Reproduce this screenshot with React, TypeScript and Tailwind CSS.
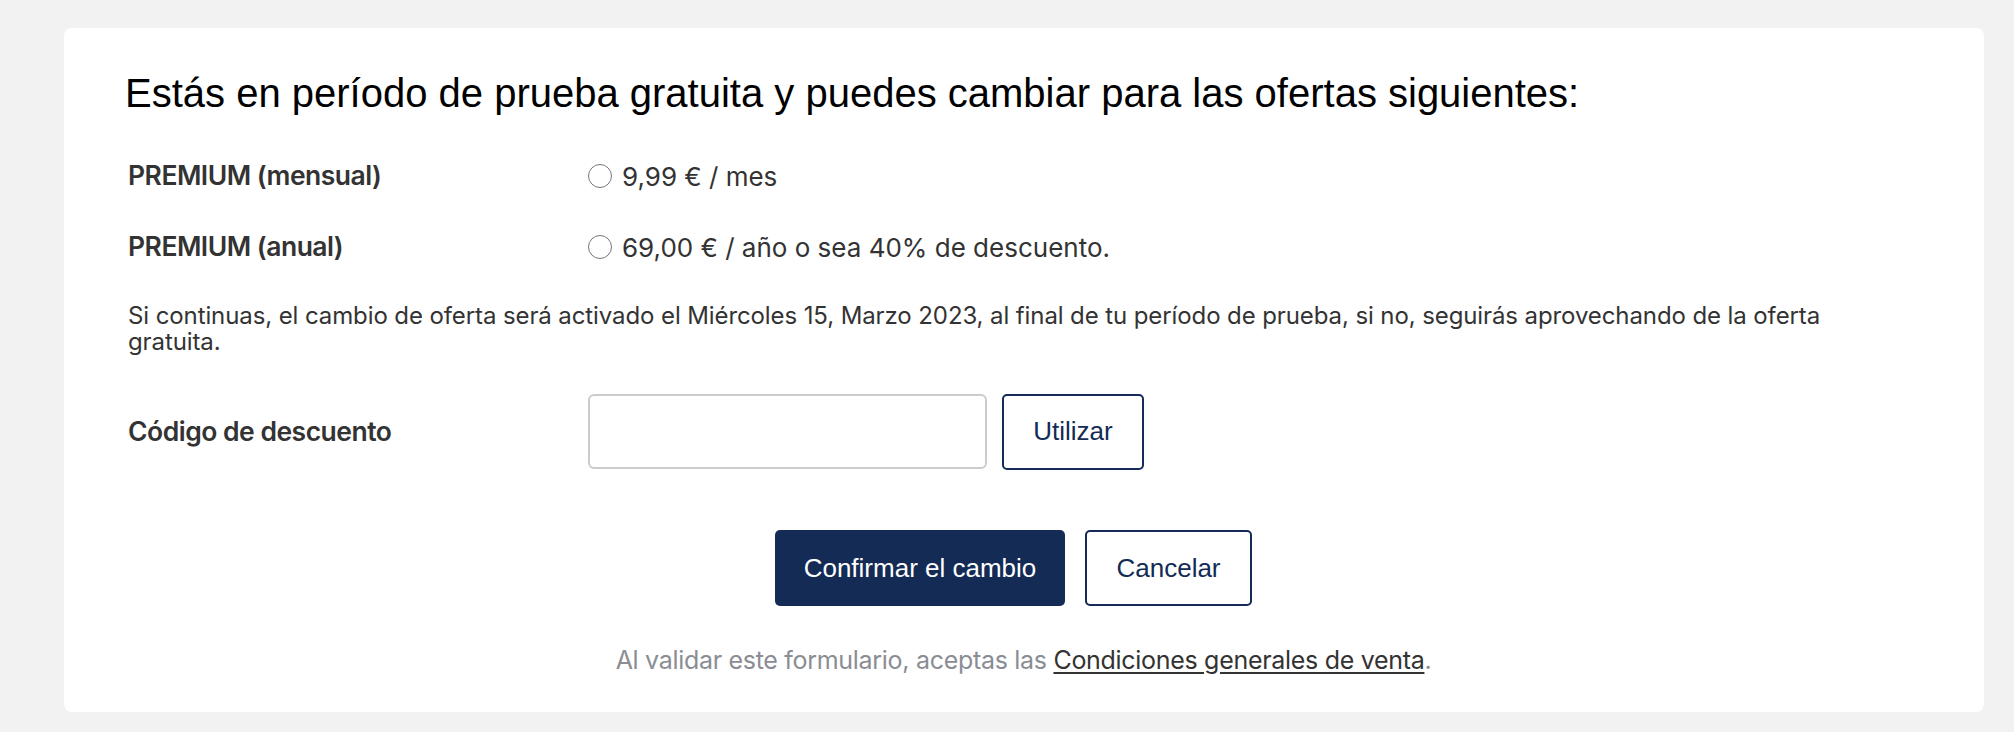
import React from "react";

const body = { fontFamily: "Inter, 'Noto Sans', sans-serif" } as const;
const arial = { fontFamily: "'Liberation Sans', Arial, sans-serif" } as const;

function Radio() {
  return (
    <span className="inline-block w-[24px] h-[24px] rounded-full border-[1.5px] border-[#767676] bg-white shrink-0" />
  );
}

export default function App() {
  return (
    <div className="min-h-[732px] bg-[#f2f2f2] pt-[28px] pb-[20px] pl-[64px] pr-[30px]" style={body}>
      <div className="bg-white rounded-[8px] h-[684px] pt-[41px] pl-[61px] pr-[62px]">
        <h1 className="text-[40px] leading-[48px] text-black" style={arial}>
          Estás en período de prueba gratuita y puedes cambiar para las ofertas siguientes:
        </h1>

        <div className="flex items-center h-[56px] mt-[31px] pl-[3px]">
          <div className="w-[460px] text-[26.5px] font-semibold text-[#333] tracking-[-0.5px]">PREMIUM (mensual)</div>
          <label className="flex items-center gap-[10px] text-[26px] text-[#333]">
            <Radio />
            <span>9,99 € / mes</span>
          </label>
        </div>

        <div className="flex items-center h-[56px] mt-[15px] pl-[3px]">
          <div className="w-[460px] text-[26.5px] font-semibold text-[#333] tracking-[-0.5px]">PREMIUM (anual)</div>
          <label className="flex items-center gap-[10px] text-[26px] text-[#333]">
            <Radio />
            <span>69,00 € / año o sea 40% de descuento.</span>
          </label>
        </div>

        <p className="mt-[28px] pl-[3px] pr-[24px] text-[24px] leading-[26px] text-[#333] tracking-[-0.1px]">
          Si continuas, el cambio de oferta será activado el Miércoles 15, Marzo 2023, al final de tu período de prueba, si no, seguirás aprovechando de la oferta gratuita.
        </p>

        <div className="flex items-center h-[75px] mt-[39px] pl-[3px]">
          <div className="w-[460px] text-[26.5px] font-semibold text-[#333] tracking-[-0.5px]">Código de descuento</div>
          <input
            type="text"
            className="w-[399px] h-[75px] rounded-[6px] border-2 border-[#cccccc] bg-white outline-none"
          />
          <button
            className="ml-[15px] w-[142px] h-[76px] rounded-[5px] border-2 border-[#132b55] bg-white text-[26px] text-[#132b55]"
            style={arial}
          >
            Utilizar
          </button>
        </div>

        <div className="flex justify-center items-center gap-[20px] mt-[61px] pr-[20px]">
          <button
            className="w-[290px] h-[76px] rounded-[5px] bg-[#132b55] text-white text-[26px]"
            style={arial}
          >
            Confirmar el cambio
          </button>
          <button
            className="w-[167px] h-[76px] rounded-[5px] border-2 border-[#132b55] bg-white text-[#132b55] text-[26px]"
            style={arial}
          >
            Cancelar
          </button>
        </div>

        <p className="mt-[39px] text-center text-[25px] leading-[30px] text-[#8a8d93] tracking-[-0.3px]">
          Al validar este formulario, aceptas las{" "}
          <a className="text-[#333] underline underline-offset-[3px]" href="#">
            Condiciones generales de venta
          </a>
          .
        </p>
      </div>
    </div>
  );
}
